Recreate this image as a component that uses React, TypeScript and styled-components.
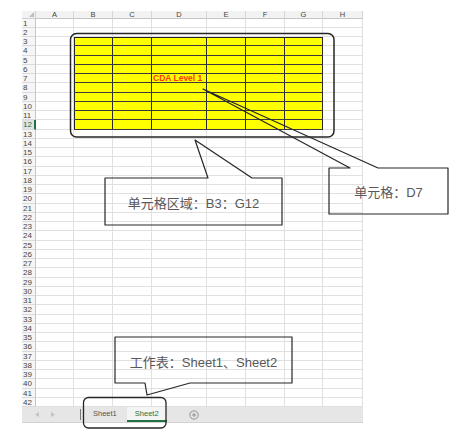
import React from 'react';
import styled, { createGlobalStyle } from 'styled-components';

const GlobalStyle = createGlobalStyle`
  html, body {
    margin: 0;
    padding: 0;
    background: #ffffff;
  }
  body {
    font-family: "Liberation Sans", "Noto Sans CJK SC", sans-serif;
  }
`;

const COLS = ['A', 'B', 'C', 'D', 'E', 'F', 'G', 'H'];
const COL_WIDTHS = [38, 39, 39, 55, 39, 39, 38, 40];
const ROW_COUNT = 42;
const ROW_H = 9.25;
const HEADER_H = 7.5;

// yellow range B3:G12 (col index 0 = A)
const inRange = (row: number, col: number) => row >= 3 && row <= 12 && col >= 1 && col <= 6;

const Page = styled.div`
  position: relative;
  width: 474px;
  height: 436px;
  overflow: hidden;
  box-sizing: border-box;
  padding: 11px 0 0 22px;
`;

const Sheet = styled.div`
  display: grid;
  grid-template-columns: 14px ${COL_WIDTHS.map((w) => `${w}px`).join(' ')};
  grid-template-rows: ${HEADER_H}px repeat(${ROW_COUNT}, ${ROW_H}px);
  width: max-content;
`;

const Corner = styled.div`
  background: #f2f2f2;
  border-right: 1px solid #cfcfcf;
  border-bottom: 1px solid #cfcfcf;
  box-sizing: border-box;
  display: flex;
  align-items: flex-end;
  justify-content: flex-end;
  padding: 0 1px 1px 0;
`;

const ColHeader = styled.div`
  background: #f2f2f2;
  border-right: 1px solid #d6d6d6;
  border-bottom: 1px solid #c6c6c6;
  box-sizing: border-box;
  font-size: 7.5px;
  line-height: 7px;
  color: #444;
  text-align: center;
`;

const RowHeader = styled.div<{ $active?: boolean }>`
  background: ${(p) => (p.$active ? '#e2e2e2' : '#f6f6f6')};
  border-bottom: 1px solid #dadada;
  border-right: ${(p) => (p.$active ? '2px solid #217346' : '1px solid #c6c6c6')};
  box-sizing: border-box;
  font-size: 8px;
  line-height: 9px;
  color: ${(p) => (p.$active ? '#217346' : '#444')};
  padding-left: 1px;
  overflow: hidden;
`;

const Cell = styled.div<{ $hl?: boolean; $top?: boolean; $left?: boolean }>`
  position: relative;
  box-sizing: border-box;
  background: ${(p) => (p.$hl ? '#ffff00' : '#ffffff')};
  border-right: 1px solid ${(p) => (p.$hl ? '#2a2a2a' : '#e0e0e0')};
  border-bottom: 1px solid ${(p) => (p.$hl ? '#3a3a3a' : '#e0e0e0')};
  box-shadow: ${(p) =>
    [p.$top ? 'inset 0 1px 0 #222' : '', p.$left ? 'inset 1px 0 0 #222' : '']
      .filter(Boolean)
      .join(', ') || 'none'};
  overflow: visible;
  white-space: nowrap;
`;

const CellText = styled.span`
  position: absolute;
  left: 1px;
  top: 0;
  font-size: 8.5px;
  line-height: 9px;
  font-weight: 700;
  color: #ff3a00;
  z-index: 1;
`;

const TabBar = styled.div`
  display: flex;
  align-items: center;
  width: 341px;
  height: 15px;
  background: #e6e6e6;
  border-bottom: 1px solid #d2d2d2;
  font-size: 7.5px;
`;

const NavGroup = styled.div`
  display: flex;
  align-items: center;
  gap: 12px;
  width: 58px;
  padding-left: 13px;
  box-sizing: border-box;
`;

const Separator = styled.div`
  width: 1px;
  height: 11px;
  background: #7a7a7a;
`;

const Tab = styled.div<{ $active?: boolean }>`
  height: 100%;
  display: flex;
  align-items: center;
  box-sizing: border-box;
  padding: 0 ${(p) => (p.$active ? 8 : 6)}px;
  margin-left: ${(p) => (p.$active ? 4 : 6)}px;
  color: ${(p) => (p.$active ? '#217346' : '#555')};
  background: ${(p) => (p.$active ? '#f4f4f4' : 'transparent')};
  border-bottom: 2px solid ${(p) => (p.$active ? '#217346' : 'transparent')};
`;

const AddButton = styled.div`
  margin-left: 22px;
  display: flex;
  align-items: center;
`;

const Overlay = styled.svg`
  position: absolute;
  left: 0;
  top: 0;
  pointer-events: none;
`;

const Label = styled.div<{ $x: number; $y: number; $w: number; $h: number }>`
  position: absolute;
  left: ${(p) => p.$x}px;
  top: ${(p) => p.$y}px;
  width: ${(p) => p.$w}px;
  height: ${(p) => p.$h}px;
  display: flex;
  align-items: center;
  justify-content: center;
  font-size: 13px;
  color: #585858;
  white-space: nowrap;
`;

function NavArrow({ dir }: { dir: 'left' | 'right' }) {
  return (
    <svg width="4" height="5" viewBox="0 0 4 5">
      <polygon points={dir === 'left' ? '4,0 4,5 0,2.5' : '0,0 0,5 4,2.5'} fill="#c2c2c2" />
    </svg>
  );
}

function SheetGrid() {
  const rows = Array.from({ length: ROW_COUNT }, (_, i) => i + 1);
  return (
    <Sheet>
      <Corner>
        <svg width="5" height="5" viewBox="0 0 5 5">
          <polygon points="5,0 5,5 0,5" fill="#bdbdbd" />
        </svg>
      </Corner>
      {COLS.map((c) => (
        <ColHeader key={c}>{c}</ColHeader>
      ))}
      {rows.map((r) => (
        <React.Fragment key={r}>
          <RowHeader $active={r === 12}>{r}</RowHeader>
          {COLS.map((c, ci) => {
            const hl = inRange(r, ci);
            return (
              <Cell key={c} $hl={hl} $top={hl && r === 3} $left={hl && ci === 1}>
                {r === 7 && c === 'D' && <CellText>CDA Level 1</CellText>}
              </Cell>
            );
          })}
        </React.Fragment>
      ))}
    </Sheet>
  );
}

export default function App() {
  return (
    <Page>
      <GlobalStyle />
      <SheetGrid />
      <TabBar>
        <NavGroup>
          <NavArrow dir="left" />
          <NavArrow dir="right" />
        </NavGroup>
        <Separator />
        <Tab>Sheet1</Tab>
        <Tab $active>Sheet2</Tab>
        <AddButton>
          <svg width="10" height="10" viewBox="0 0 10 10">
            <circle cx="5" cy="5" r="4.2" fill="none" stroke="#8a8a8a" strokeWidth="0.9" />
            <path d="M5 2.8v4.4M2.8 5h4.4" stroke="#8a8a8a" strokeWidth="0.9" />
          </svg>
        </AddButton>
      </TabBar>

      <Overlay width="474" height="436" viewBox="0 0 474 436">
        <g fill="none" stroke="#262626" strokeLinejoin="round">
          <rect x="70.5" y="33.5" width="263.5" height="103.5" rx="6" strokeWidth="1.5" />
          <rect x="83.5" y="397.5" width="82.5" height="30.5" rx="5" strokeWidth="1.3" />
          <polygon
            points="329,168 350,168 203,89 378,168 448,168 448,214 329,214"
            strokeWidth="1.2"
          />
          <polygon
            points="105,178 208,178 195,140 252,178 282,178 282,225 105,225"
            strokeWidth="1.2"
          />
          <polygon
            points="115,337 292,337 292,383 190,383 147,395 145,383 115,383"
            strokeWidth="1.2"
          />
        </g>
      </Overlay>

      <Label $x={329} $y={168} $w={119} $h={46}>单元格：D7</Label>
      <Label $x={105} $y={179} $w={177} $h={46}>单元格区域：B3：G12</Label>
      <Label $x={115} $y={338} $w={177} $h={46}>工作表：Sheet1、Sheet2</Label>
    </Page>
  );
}
